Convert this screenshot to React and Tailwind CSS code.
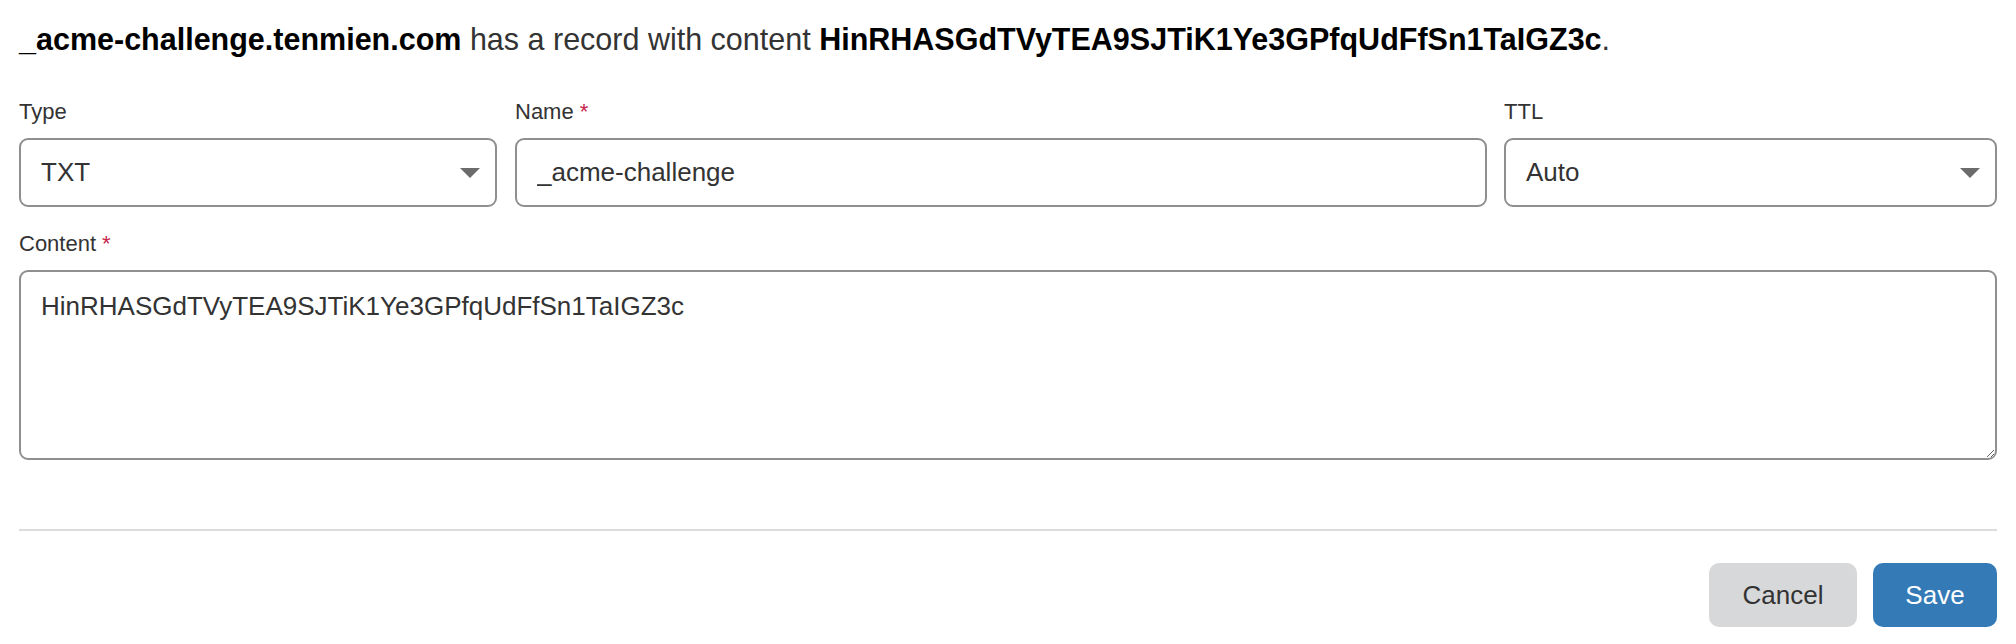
import React from "react";

const font = { fontFamily: '"Liberation Sans", Arial, sans-serif' };

function Caret() {
  return (
    <svg width="20" height="10" viewBox="0 0 20 10" className="shrink-0">
      <path d="M0 0 L20 0 L10 10 Z" fill="#6b6b6b" />
    </svg>
  );
}

function Label({ children, required }) {
  return (
    <div className="text-[22px] leading-[33px] text-[#333] mb-[10px]">
      {children}
      {required && <span className="text-[#c7254e] ml-[6px]">*</span>}
    </div>
  );
}

export default function App() {
  return (
    <div className="bg-white w-[2016px] h-[644px] px-[19px] pt-[17px]" style={font}>
      <p className="text-[30.5px] leading-[45px] text-[#222] whitespace-nowrap">
        <span className="font-bold text-black">_acme-challenge.tenmien.com</span>
        <span className="text-[#333]"> has a record with content </span>
        <span className="font-bold text-black">HinRHASGdTVyTEA9SJTiK1Ye3GPfqUdFfSn1TaIGZ3c</span>
        <span className="text-[#333]">.</span>
      </p>

      <div className="flex mt-[33px]">
        <div className="w-[478px] shrink-0">
          <Label>Type</Label>
          <div className="h-[69px] border-2 border-[#8f8f8f] rounded-[9px] flex items-center justify-between pl-[20px] pr-[15px] text-[26px] text-[#333]">
            <span>TXT</span>
            <Caret />
          </div>
        </div>
        <div className="flex-1 ml-[18px]">
          <Label required>Name</Label>
          <input
            readOnly
            value="_acme-challenge"
            className="w-full h-[69px] border-2 border-[#8f8f8f] rounded-[9px] px-[20px] text-[26px] text-[#333] outline-none"
            style={font}
          />
        </div>
        <div className="w-[493px] shrink-0 ml-[17px]">
          <Label>TTL</Label>
          <div className="h-[69px] border-2 border-[#8f8f8f] rounded-[9px] flex items-center justify-between pl-[20px] pr-[15px] text-[26px] text-[#333]">
            <span>Auto</span>
            <Caret />
          </div>
        </div>
      </div>

      <div className="mt-[20px]">
        <Label required>Content</Label>
        <textarea
          readOnly
          defaultValue="HinRHASGdTVyTEA9SJTiK1Ye3GPfqUdFfSn1TaIGZ3c"
          className="block w-full h-[190px] border-2 border-[#8f8f8f] rounded-[9px] px-[20px] pt-[15px] pb-[10px] text-[26px] leading-[39px] text-[#333] outline-none resize-y"
          style={font}
        />
      </div>

      <div className="mt-[69px] border-t-2 border-[#dcdcdc]" />

      <div className="flex justify-end gap-[16px] mt-[32px]">
        <button className="w-[148px] h-[64px] rounded-[10px] bg-[#d7d8da] text-[26px] text-[#333]" style={font}>
          Cancel
        </button>
        <button className="w-[124px] h-[64px] rounded-[10px] bg-[#337ab7] text-[26px] text-white" style={font}>
          Save
        </button>
      </div>
    </div>
  );
}
